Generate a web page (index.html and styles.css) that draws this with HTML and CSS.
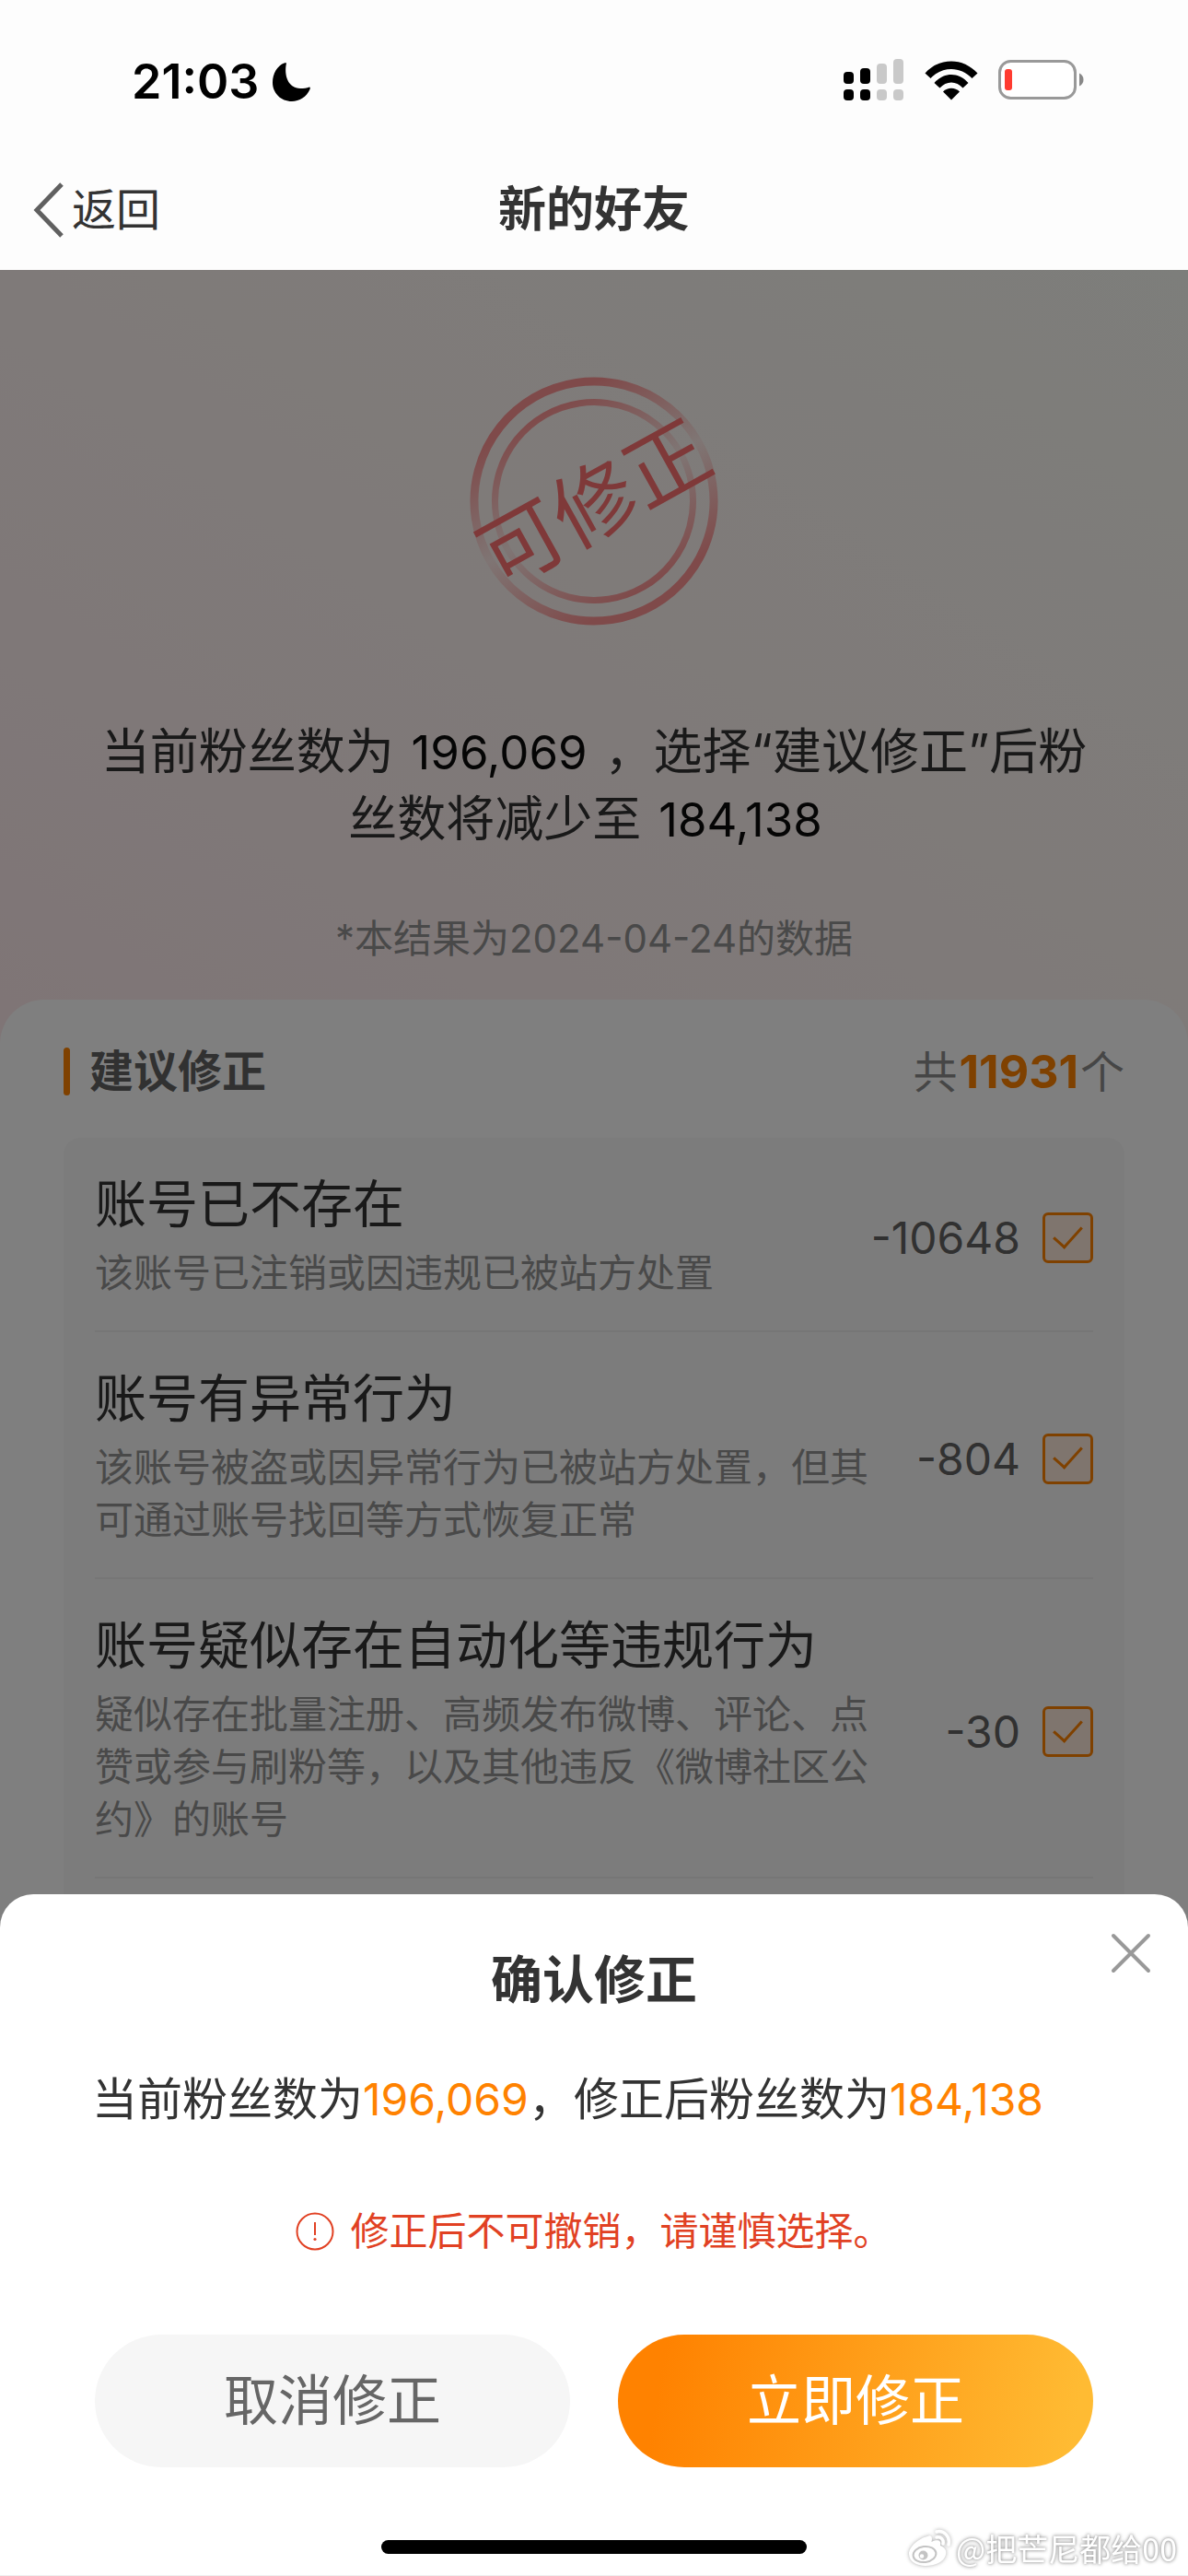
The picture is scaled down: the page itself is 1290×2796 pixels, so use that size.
FILE: index.html
```html
<!DOCTYPE html>
<html lang="zh-CN">
<head>
    <meta charset="UTF-8">
    <meta name="viewport" content="width=device-width, initial-scale=1.0">
    <title>新的好友</title>
    <link rel="stylesheet" href="styles.css">
</head>
<body>
    <header class="header">
        <div class="status">
            <div class="status-left">
                <span class="time">21:03</span>
                <svg class="moon" width="42" height="42" viewBox="0 0 42 42">
                    <path d="M16 0.500C13 14 18 28 31 28C35 28 38 27.500 41 26.500C42 26.500 42 27.500 41.500 29C38 37 30 42 22 42C10 42 1 33 1 21.500C1 12 6 3.500 13.500 0.500C15 0 16 0 16 0.500Z" fill="#000"/>
                </svg>
            </div>
            <div class="status-right">
                <svg width="66" height="46" viewBox="0 0 66 46">
                    <g fill="#000">
                        <rect x="0" y="14" width="11" height="13" rx="4"/>
                        <rect x="18" y="10" width="11" height="17" rx="4"/>
                        <rect x="0" y="33" width="11" height="12" rx="4"/>
                        <rect x="18" y="33" width="11" height="12" rx="4"/>
                    </g>
                    <g fill="#c9c9c9">
                        <rect x="36" y="5" width="11" height="22" rx="4"/>
                        <rect x="54" y="0" width="11" height="27" rx="4"/>
                        <rect x="36" y="33" width="11" height="12" rx="4"/>
                        <rect x="54" y="33" width="11" height="12" rx="4"/>
                    </g>
                </svg>
                <svg width="58" height="43" viewBox="0 0 58 43">
                    <path d="M0.500 13.500C16 -4 42 -4 57.500 13.500L51.500 19C39 5.500 19 5.500 6.500 19Z" fill="#000"/>
                    <path d="M10.500 24C21 12 37 12 47.500 24L41.500 29.500C34.500 21.500 23.500 21.500 16.500 29.500Z" fill="#000"/>
                    <path d="M20 33.500C25 28.500 33 28.500 38 33.500L29 42.500Z" fill="#000"/>
                </svg>
                <svg width="94" height="44" viewBox="0 0 94 44">
                    <rect x="1.500" y="1.500" width="82" height="40" rx="12" fill="#fff" stroke="#999" stroke-width="3"/>
                    <rect x="7" y="10" width="8" height="23" rx="3" fill="#ff3b30"/>
                    <path d="M88 14.500C94 17 94 26 88 28.500Z" fill="#888"/>
                </svg>
            </div>
        </div>
        <nav class="nav">
            <a href="#" class="back">
                <svg width="34" height="60" viewBox="0 0 34 60">
                    <path d="M31 2L4 30L31 58" fill="none" stroke="#606060" stroke-width="5"/>
                </svg>
                <span>返回</span>
            </a>
            <h1 class="nav-title">新的好友</h1>
        </nav>
    </header>

    <main class="main">
        <section class="hero">
            <svg class="stamp" width="270" height="270" viewBox="0 0 270 270">
                <defs>
                    <linearGradient id="ringTop" gradientUnits="userSpaceOnUse" x1="75" y1="40" x2="135" y2="144">
                        <stop offset="0" stop-color="#ff9494"/>
                        <stop offset="1" stop-color="#ff9494" stop-opacity="0.050"/>
                    </linearGradient>
                    <linearGradient id="ringBottom" gradientUnits="userSpaceOnUse" x1="195" y1="230" x2="135" y2="126">
                        <stop offset="0" stop-color="#ff9494"/>
                        <stop offset="1" stop-color="#ff9494" stop-opacity="0.050"/>
                    </linearGradient>
                </defs>
                <g fill="none" stroke="url(#ringTop)">
                    <path d="M22.400 200A130 130 0 0 1 247.600 70" stroke-width="9"/>
                    <path d="M41.900 188.800A107.500 107.500 0 0 1 228.100 81.200" stroke-width="7"/>
                </g>
                <g fill="none" stroke="url(#ringBottom)">
                    <path d="M22.400 200A130 130 0 0 0 247.600 70" stroke-width="9"/>
                    <path d="M41.900 188.800A107.500 107.500 0 0 0 228.100 81.200" stroke-width="7"/>
                </g>
                <text class="stamp-text" x="134" y="170" text-anchor="middle" transform="rotate(-29 135 135)">可修正</text>
            </svg>
            <p class="summary">当前粉丝数为 <b>196,069</b> ，选择“建议修正”后粉丝数将减少至 <b>184,138</b>&nbsp;</p>
            <p class="note">*本结果为2024-04-24的数据</p>
        </section>

        <section class="card">
            <div class="card-head">
                <h2 class="card-title">建议修正</h2>
                <span class="total">共<b>11931</b>个</span>
            </div>
            <ul class="list">
                <li class="row">
                    <label class="info" for="gone">
                        <span class="row-title">账号已不存在</span>
                        <span class="desc">该账号已注销或因违规已被站方处置</span>
                    </label>
                    <span class="count">-10648</span>
                    <input class="check" type="checkbox" id="gone" checked>
                </li>
                <li class="row">
                    <label class="info" for="abnormal">
                        <span class="row-title">账号有异常行为</span>
                        <span class="desc">该账号被盗或因异常行为已被站方处置，但其可通过账号找回等方式恢复正常</span>
                    </label>
                    <span class="count">-804</span>
                    <input class="check" type="checkbox" id="abnormal" checked>
                </li>
                <li class="row">
                    <label class="info" for="robot">
                        <span class="row-title">账号疑似存在自动化等违规行为</span>
                        <span class="desc">疑似存在批量注册、高频发布微博、评论、点赞或参与刷粉等，以及其他违反《微博社区公约》的账号</span>
                    </label>
                    <span class="count">-30</span>
                    <input class="check" type="checkbox" id="robot" checked>
                </li>
            </ul>
        </section>
        <div class="mask"></div>
    </main>

    <section class="sheet" role="dialog" aria-labelledby="sheet-title">
        <button class="close" type="button" aria-label="关闭">
            <svg width="44" height="44" viewBox="0 0 44 44">
                <path d="M3 3L41 41M41 3L3 41" fill="none" stroke="#999" stroke-width="4" stroke-linecap="round"/>
            </svg>
        </button>
        <h2 class="sheet-title" id="sheet-title">确认修正</h2>
        <p class="sheet-text">当前粉丝数为<span class="num">196,069</span>，修正后粉丝数为<span class="num">184,138</span></p>
        <p class="warning">
            <svg width="42" height="42" viewBox="0 0 42 42">
                <circle cx="21" cy="21" r="19.500" fill="none" stroke="#e14123" stroke-width="2"/>
                <path d="M21 11V25" stroke="#e14123" stroke-width="2"/>
                <circle cx="21" cy="29.500" r="1.600" fill="#e14123"/>
            </svg>
            <span>修正后不可撤销，请谨慎选择。</span>
        </p>
        <div class="actions">
            <button class="btn cancel" type="button">取消修正</button>
            <button class="btn confirm" type="button">立即修正</button>
        </div>
        <div class="home-bar"></div>
        <div class="watermark">
            <svg width="48" height="42" viewBox="0 0 48 42">
                <path d="M21 8C25 6 27 9 25.500 14C31 11 37 12 35 18C40 20 42 23 41 28C39 36 29 40 19 40C9 40 1 35 1 27C1 19 12 10 21 8Z" fill="#fff"/>
                <ellipse cx="18" cy="27.500" rx="12.500" ry="8.500" transform="rotate(-8 18 27.500)" fill="none" stroke="#c4c4c4" stroke-width="2"/>
                <circle cx="16.500" cy="28.500" r="5" fill="#c4c4c4"/>
                <circle cx="15" cy="29.500" r="2.200" fill="#fff"/>
                <path d="M31 3C39 1 46 8 44 17M31 9C36 8 39 12 38 16" fill="none" stroke="#fff" stroke-width="3.500" stroke-linecap="round"/>
            </svg>
            <span>@把芒尼都给00</span>
        </div>
    </section>
</body>
</html>
```
FILE: styles.css
```css
* {
    box-sizing: border-box;
    margin: 0;
    padding: 0;
}
body {
    display: flex;
    flex-direction: column;
    height: 100vh;
    overflow: hidden;
    background-color: #fff;
    color: #333;
    font-family: Inter, "Noto Sans CJK SC", sans-serif;
}
svg {
    display: block;
    flex: none;
}

/* header */
.header {
    background-color: #fdfdfd;
    padding-bottom: 11px;
}
.status {
    display: flex;
    justify-content: space-between;
    align-items: center;
    height: 174px;
    padding: 0 112px 0 143px;
}
.status-left {
    display: flex;
    align-items: center;
    gap: 14px;
    padding-top: 3px;
}
.status-right {
    display: flex;
    align-items: center;
    gap: 22px;
}
.time {
    color: #000;
    font-size: 52px;
    font-weight: 600;
    line-height: 64px;
}
.nav {
    display: grid;
    grid-template-columns: 1fr auto 1fr;
    align-items: center;
    height: 108px;
    padding: 0 36px;
    line-height: 60px;
}
.back {
    display: flex;
    align-items: center;
    gap: 8px;
    color: #333;
    font-size: 48px;
    text-decoration: none;
}
.nav-title {
    font-size: 52px;
    font-weight: 600;
}

/* page behind the dialog */
.main {
    position: relative;
    flex: 1;
    min-height: 0;
    display: flex;
    flex-direction: column;
    overflow: hidden;
    background: #fff linear-gradient(215deg, #fbfcf6, #fff6f3 45%, #ffeff0 80%, #ffeaec) no-repeat;
    background-size: 100% 860px;
}
.mask {
    position: absolute;
    inset: 0;
    background-color: rgba(0, 0, 0, 0.5);
}
.hero {
    display: flex;
    flex-direction: column;
    align-items: center;
    padding: 116px 104px 36px;
    text-align: center;
}
.stamp {
    overflow: visible;
}
.stamp-text {
    fill: #ff7272;
    font-size: 90px;
}
.summary {
    margin-top: 101px;
    font-size: 53px;
    line-height: 73px;
}
.summary b {
    margin: 0 4px;
    color: #0a0a0a;
    font-size: 51px;
    font-weight: 400;
}
.note {
    margin-top: 63px;
    color: #939393;
    font-size: 42px;
    line-height: 60px;
}
.card {
    flex: 1;
    display: flex;
    flex-direction: column;
    padding: 52px 69px 0;
    border-radius: 48px 48px 0 0;
    background-color: #fff;
}
.card-head {
    display: flex;
    justify-content: space-between;
    align-items: center;
    height: 52px;
    margin-bottom: 46px;
    font-size: 48px;
    line-height: 52px;
}
.card-title {
    display: flex;
    align-items: center;
    gap: 21px;
    color: #636363;
    font-size: 48px;
    font-weight: 600;
}
.card-title::before {
    content: "";
    width: 7px;
    height: 52px;
    border-radius: 4px;
    background-color: #ff8200;
}
.total {
    color: #8c8c8c;
}
.total b {
    margin: 0 2px;
    color: #ff8200;
    font-size: 50px;
    font-weight: 700;
}
.list {
    flex: 1;
    padding: 0 34px;
    border-radius: 18px 18px 0 0;
    background-color: #f9f9f9;
    list-style: none;
}
.row {
    display: flex;
    align-items: center;
    padding: 42px 0 34px;
    border-bottom: 2px solid #ededed;
}
.info {
    flex: 1;
    max-width: 844px;
    margin-right: auto;
}
.row-title {
    display: block;
    margin-bottom: 16px;
    font-size: 56px;
    line-height: 60px;
}
.desc {
    display: block;
    color: #939393;
    font-size: 42px;
    line-height: 57px;
}
.count {
    margin-left: -40px;
    color: #636363;
    font-size: 48px;
}
.check {
    display: grid;
    place-content: center;
    appearance: none;
    flex: none;
    width: 55px;
    height: 55px;
    margin-left: 24px;
    border: 3px solid #ff8200;
    border-radius: 6px;
    background-color: #ffeadc;
}
.check:checked::after {
    content: "";
    width: 14px;
    height: 27px;
    margin-bottom: 10px;
    border: solid #ff8200;
    border-width: 0 3px 3px 0;
    transform: rotate(42deg);
}

/* confirm dialog */
.sheet {
    position: fixed;
    left: 0;
    right: 0;
    bottom: 0;
    display: flex;
    flex-direction: column;
    padding: 53px 100px 23px;
    border-bottom: 1px solid #eee;
    border-radius: 36px 36px 0 0;
    background-color: #fff;
}
.close {
    position: absolute;
    top: 42px;
    right: 40px;
    border: 0;
    background: none;
    cursor: pointer;
}
.sheet-title {
    font-size: 56px;
    font-weight: 600;
    line-height: 80px;
    text-align: center;
}
.sheet-text {
    margin-top: 54px;
    font-size: 49px;
    line-height: 72px;
}
.num {
    color: #ff8200;
    font-size: 48px;
}
.warning {
    display: flex;
    justify-content: center;
    align-items: center;
    gap: 17px;
    margin-top: 77px;
    color: #e14123;
    font-size: 42px;
    line-height: 60px;
}
.actions {
    display: flex;
    gap: 52px;
    margin-top: 82px;
    padding: 0 3px;
}
.btn {
    flex: 1;
    height: 144px;
    border: 0;
    border-radius: 72px;
    font-family: inherit;
    font-size: 59px;
    line-height: 80px;
    cursor: pointer;
}
.cancel {
    background-color: #f6f6f6;
    color: #666;
}
.confirm {
    background-image: linear-gradient(100deg, #ff8200 10%, #ffbb33 95%);
    color: #fff;
}
.home-bar {
    align-self: center;
    width: 462px;
    height: 15px;
    margin-top: 79px;
    border-radius: 8px;
    background-color: #000;
}
.watermark {
    position: absolute;
    right: 12px;
    bottom: 6px;
    display: flex;
    align-items: center;
    gap: 4px;
    color: #fff;
    font-family: "Noto Sans CJK SC", sans-serif;
    font-size: 34px;
    line-height: 46px;
    text-shadow: 0 0 4px #999, 0 0 3px #aaa;
}
.watermark svg {
    filter: drop-shadow(0 0 2px #aaa);
}
```
